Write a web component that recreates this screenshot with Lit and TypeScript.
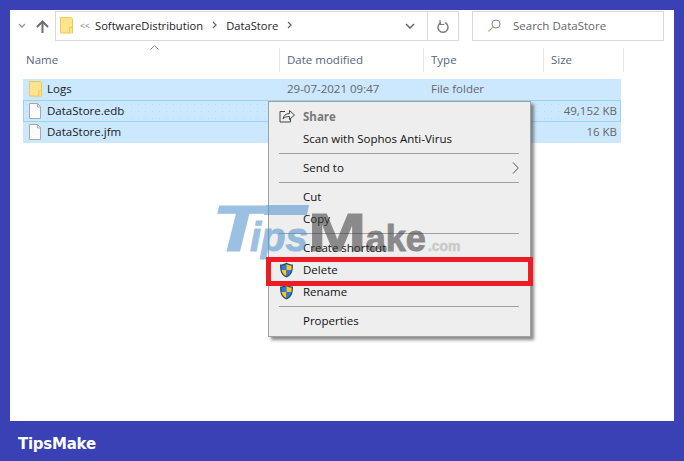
import { LitElement, html, css, svg } from "lit";
import { customElement } from "lit/decorators.js";

const folder = (w = 13, h = 17) => html`<svg class="ic" width=${w} height=${h} viewBox="0 0 14 17" preserveAspectRatio="none"><path d="M.5.5h11.5l1.5 1.5v14H.5z" fill="#ffe38f" stroke="#eec64d"/><path d="M10.5 16V10.5h3V16" fill="#ffe38f" stroke="#eec64d"/></svg>`;
const fileIc = html`<svg class="ic" width="12" height="16" viewBox="0 0 12 16"><path d="M.5.5h8l3 3v12H.5z" fill="#fbfbfb" stroke="#a8a8a8"/><path d="M8.500.5v3.500h3" fill="none" stroke="#a8a8a8"/></svg>`;
const shield = html`<svg class="shield" width="15" height="16" viewBox="0 0 15 16"><path d="M7.500.5C5.500 2 3 2.500 1 2.500 1 8 1.500 13 7.500 15.500 13.500 13 14 8 14 2.500 12 2.500 9.500 2 7.500.5z" fill="#2f4c6e"/><path d="M7.500 2C6 3 4 3.500 2.300 3.700c0 1.500.1 2.800.3 4.300h4.900z" fill="#2b7cd3"/><path d="M7.500 2c1.500 1 3.500 1.500 5.200 1.700 0 1.500-.1 2.800-.3 4.300H7.500z" fill="#fbc531"/><path d="M2.600 8h4.900v6C4.500 12.800 3 10.500 2.600 8z" fill="#fbc531"/><path d="M7.500 8h4.900c-.4 2.500-1.900 4.800-4.900 6z" fill="#2b7cd3"/></svg>`;
const shareIc = html`<svg class="shield" width="16" height="14" viewBox="0 0 16 14" fill="none" stroke="#444" stroke-width="1"><path d="M6 2.500H1v10.500h10.500V9"/><path d="M4 10c.5-3.500 3-5.500 6.500-5.500V1.500L15.500 6l-5 4.500V7.500C8 7.500 5.500 8 4 10z" fill="#eee"/></svg>`;

@customElement("app-root")
export class AppRoot extends LitElement {
  static styles = css`
    :host { display: block; width: 684px; height: 461px; background: #3a41b5; font-family: "Open Sans", "Noto Sans", sans-serif; font-size: 11.500px; color: #1a1a1a; overflow: hidden; }
    .win { position: relative; margin: 10px 10px 0; width: 664px; height: 411px; background: #fff; overflow: hidden; }
    .bar { display: flex; align-items: center; height: 30px; padding-top: 1px; }
    .nav { width: 45px; display: flex; align-items: center; flex: none; padding-left: 8px; box-sizing: border-box; gap: 10px; }
    .addr { width: 404px; height: 30px; box-sizing: border-box; border: 1px solid #d9d9d9; display: flex; align-items: center; flex: none; }
    .crumbs { flex: 1; display: flex; align-items: center; padding: 0 0 2px 4px; min-width: 0; white-space: nowrap; font-size: 11.200px; box-sizing: border-box; height: 28px; }
    .crumbs span { color: #1e1e1e; }
    .crumbs .lt { color: #777; width: 8px; margin: 0 7px 0 7px; font-size: 9px; letter-spacing: -.5px; }
    .crumbs svg.sep { margin: 0 9px; }
    .dd { width: 34px; display: flex; justify-content: center; }
    .ref { width: 30px; height: 28px; border-left: 1px solid #d9d9d9; display: flex; align-items: center; justify-content: center; }
    .search { margin-left: 13px; width: 192px; height: 30px; box-sizing: border-box; border: 1px solid #d9d9d9; display: flex; align-items: center; padding: 0 0 2px 15px; gap: 12px; color: #666; flex: none; }
    .head { display: grid; grid-template-columns: 257px 144px 120px 80px; margin: 7px 0 0 13px; height: 24px; width: 601px; position: relative; }
    .head > div { border-right: 1px solid #e5e5e5; padding: 0 0 2px 3px; display: flex; align-items: center; color: #55667a; box-sizing: border-box; }
    .head > div + div { padding-left: 7px; }
    .caret { position: absolute; left: 127px; top: -3px; }
    .rows { margin: 7px 0 0 13px; width: 598px; }
    .row { display: grid; grid-template-columns: 257px 144px 120px 77px; height: 21px; padding-bottom: 2px; align-items: center; background: #cce8ff; box-sizing: border-box; }
    .row.focus { border-top: 1px solid #99d1ff; border-bottom: 1px solid #99d1ff; box-shadow: inset 1px 0 #99d1ff, inset -1px 0 #99d1ff; height: 22px; padding-bottom: 1px; background-image: radial-gradient(circle, #b3daf8 .6px, transparent .8px); background-size: 7px 7px; }
    .row > div { color: #666; white-space: nowrap; }
    .nm { display: flex; align-items: center; color: #1a1a1a !important; }
    .nm .cell { width: 24px; display: flex; justify-content: center; flex: none; }
    .row .dt { padding-left: 7px; }
    .row .ty { padding-left: 7px; }
    .row .sz { text-align: right; padding-right: 4px; }
    .menu { position: absolute; left: 258px; top: 91px; width: 263px; height: 236px; box-sizing: border-box; border: 1px solid #a0a0a0; background: #eee; padding: 4px 0; box-shadow: 3px 3px 3px rgba(60,60,60,.6); }
    .it { height: 22px; box-sizing: border-box; padding: 0 0 2px 34px; display: flex; align-items: center; position: relative; white-space: nowrap; color: #111; }
    .it.b { color: #777; font-weight: 700; }
    .it .lead { position: absolute; left: 10px; top: 3px; }
    .it .chev { position: absolute; right: 11px; top: 5px; }
    .sp { height: 1px; background: #a0a0a0; margin: 3px 11px 3px 10px; }
    .wm { position: absolute; left: 202px; top: 180px; height: 78px; opacity: .55; font-family: "Liberation Sans", sans-serif; font-weight: 700; white-space: nowrap; display: flex; align-items: baseline; line-height: 78px; }
    .wm .t { color: #4a90cc; font-style: italic; -webkit-text-stroke: 1px #4a90cc; }
    .wm .big { position: relative; display: inline-block; font-size: 65px; width: 38px; }
    .wm .big span { display: inline-block; transform: scaleX(1.300); transform-origin: left center; }
    .wm .big::after { content: ""; position: absolute; left: 53px; top: 15px; width: 43px; height: 10px; background: #4a90cc; transform: skewX(-12deg); }
    .wm .ips { font-size: 40px; }
    .wm .m { color: #3a3a3a; -webkit-text-stroke: 1px #3a3a3a; }
    .wm .mm { display: inline-block; font-size: 54px; transform: scaleX(1.300); transform-origin: left center; width: 58px; }
    .wm .ake { font-size: 36px; }
    .wm .c { color: #aaa; font-size: 14px; margin-left: 2px; -webkit-text-stroke: .4px #aaa; }
    .red { position: absolute; left: 256px; top: 247px; width: 267px; height: 29px; box-sizing: border-box; border: 5px solid #ed1c24; }
    .foot { padding: 13px 0 0 18px; color: #fff; font-family: "DejaVu Sans", sans-serif; font-weight: 700; font-size: 15px; letter-spacing: -.25px; line-height: 20px; }
  `;

  render() {
    const sepChev = svg`<path d="M1 1l3 3-3 3" fill="none" stroke="#666" stroke-width="1.300"/>`;
    return html`
      <div class="win">
        <div class="bar">
          <div class="nav">
            <svg width="8" height="6" viewBox="0 0 8 6"><path d="M1 1l3 3 3-3" fill="none" stroke="#999" stroke-width="1.300"/></svg>
            <svg width="13" height="13" viewBox="0 0 13 13"><path d="M6.500 13V2M1 7l5.500-5.500L12 7" fill="none" stroke="#6e6e6e" stroke-width="2"/></svg>
          </div>
          <div class="addr">
            <div class="crumbs">
              ${folder(13, 17)}
              <span class="lt">&lt;&lt;</span>
              <span>SoftwareDistribution</span>
              <svg class="sep" width="5" height="8" viewBox="0 0 5 8">${sepChev}</svg>
              <span>DataStore</span>
              <svg class="sep" width="5" height="8" viewBox="0 0 5 8">${sepChev}</svg>
            </div>
            <div class="dd"><svg width="10" height="6" viewBox="0 0 10 6"><path d="M1 1l4 4 4-4" fill="none" stroke="#666" stroke-width="1.500"/></svg></div>
            <div class="ref"><svg width="12" height="13" viewBox="0 0 12 13"><path d="M4 2.700a5 5 0 1 0 4 0" fill="none" stroke="#777" stroke-width="1.400"/><path d="M3 0v4.500h4.200" fill="none" stroke="#777" stroke-width="1.200"/></svg></div>
          </div>
          <div class="search">
            <svg width="13" height="13" viewBox="0 0 13 13"><circle cx="8" cy="5" r="4" fill="none" stroke="#888"/><path d="M5 8l-4.500 4.500" stroke="#c9a66b" stroke-width="1.200"/></svg>
            <span>Search DataStore</span>
          </div>
        </div>
        <div class="head">
          <div>Name</div><div>Date modified</div><div>Type</div><div>Size</div>
          <svg class="caret" width="9" height="5" viewBox="0 0 9 5"><path d="M.5 4.500l4-4 4 4" fill="none" stroke="#888"/></svg>
        </div>
        <div class="rows">
          <div class="row"><div class="nm"><span class="cell">${folder(13, 16)}</span>Logs</div><div class="dt">29-07-2021 09:47</div><div class="ty">File folder</div><div class="sz"></div></div>
          <div class="row focus"><div class="nm"><span class="cell">${fileIc}</span>DataStore.edb</div><div class="dt"></div><div class="ty"></div><div class="sz">49,152 KB</div></div>
          <div class="row"><div class="nm"><span class="cell">${fileIc}</span>DataStore.jfm</div><div class="dt"></div><div class="ty"></div><div class="sz">16 KB</div></div>
        </div>
        <div class="menu">
          <div class="it b"><span class="lead">${shareIc}</span>Share</div>
          <div class="it">Scan with Sophos Anti-Virus</div>
          <div class="sp"></div>
          <div class="it">Send to<svg class="chev" width="7" height="12" viewBox="0 0 7 12"><path d="M1 .5L6.300 6 1 11.500" fill="none" stroke="#555"/></svg></div>
          <div class="sp"></div>
          <div class="it">Cut</div>
          <div class="it">Copy</div>
          <div class="sp"></div>
          <div class="it">Create shortcut</div>
          <div class="it"><span class="lead">${shield}</span>Delete</div>
          <div class="it"><span class="lead">${shield}</span>Rename</div>
          <div class="sp"></div>
          <div class="it">Properties</div>
        </div>
        <div class="wm"><span class="t big"><span>T</span></span><span class="t ips">ips</span><span class="m mm">M</span><span class="m ake">ake</span><span class="c">.com</span></div>
        <div class="red"></div>
      </div>
      <div class="foot">TipsMake</div>
    `;
  }
}
